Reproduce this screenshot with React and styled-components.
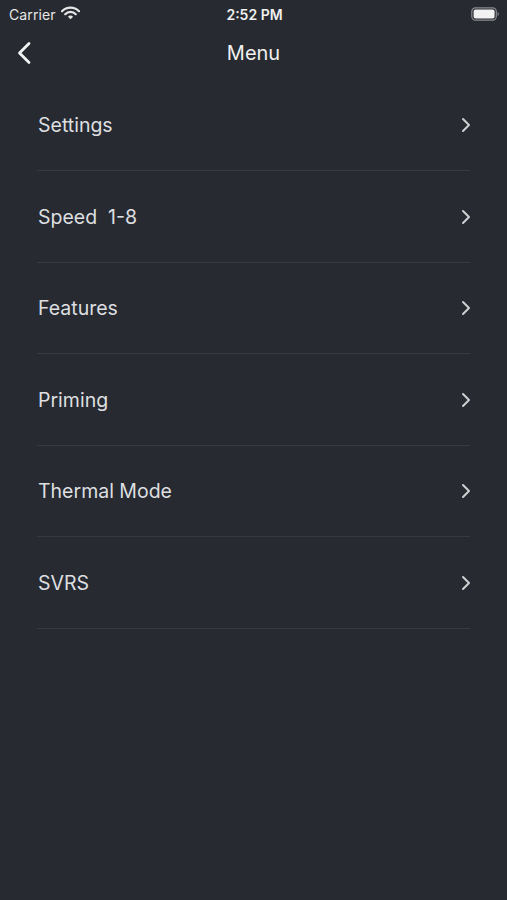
import styled, { createGlobalStyle } from "styled-components";

const GlobalStyle = createGlobalStyle`
  body {
    margin: 0;
    background-color: #272b31;
    font-family: Inter, "Noto Sans", "Liberation Sans", sans-serif;
  }
`;

const items = ["Settings", "Speed  1-8", "Features", "Priming", "Thermal Mode", "SVRS"];

const App = () => {
  return (
    <Screen>
      <GlobalStyle />
      <StatusBar>
        <Carrier>
          Carrier
          <svg width="19" height="14" viewBox="0 0 19 14">
            <path d="M1 5.2a12 12 0 0 1 17 0" stroke="#e6e6e6" strokeWidth="2.2" fill="none" strokeLinecap="round" />
            <path d="M4.2 8.2a7.4 7.4 0 0 1 10.6 0" stroke="#e6e6e6" strokeWidth="2.2" fill="none" strokeLinecap="round" />
            <path d="M9.5 13.2 6.9 10.7a3.7 3.7 0 0 1 5.2 0z" fill="#e6e6e6" />
          </svg>
        </Carrier>
        <Time>2:52 PM</Time>
        <Battery>
          <svg width="29" height="14" viewBox="0 0 29 14">
            <rect x="0.8" y="0.8" width="24.5" height="12.4" rx="3.6" stroke="#8a8c90" strokeWidth="1.2" fill="none" />
            <rect x="2.6" y="2.6" width="21" height="8.8" rx="2" fill="#f2f2f2" />
            <path d="M26.6 5v4a2.2 2.2 0 0 0 0-4z" fill="#8a8c90" />
          </svg>
        </Battery>
      </StatusBar>
      <NavBar>
        <BackButton>
          <svg width="16" height="24" viewBox="0 0 16 24">
            <path d="M13 2.5 3.5 12 13 21.5" stroke="#f2f2f2" strokeWidth="2.8" fill="none" strokeLinecap="round" strokeLinejoin="round" />
          </svg>
        </BackButton>
        <Title>Menu</Title>
      </NavBar>
      <List>
        {items.map((label) => (
          <Row key={label}>
            <Label>{label}</Label>
            <svg width="10" height="16" viewBox="0 0 10 16">
              <path d="M2 2l6 6-6 6" stroke="#cfcfd1" strokeWidth="2" fill="none" strokeLinecap="round" strokeLinejoin="round" />
            </svg>
          </Row>
        ))}
      </List>
    </Screen>
  );
};

const Screen = styled.div`
  width: 507px;
  min-height: 900px;
  background-color: #272b31;
  color: #e6e6e6;
`;

const StatusBar = styled.div`
  height: 28px;
  display: grid;
  grid-template-columns: 1fr auto 1fr;
  align-items: center;
  padding: 0 7px 0 9px;
  font-size: 14px;
`;

const Carrier = styled.div`
  display: flex;
  align-items: center;
  gap: 5px;
  color: #e6e6e6;
  letter-spacing: 0.1px;

  svg {
    margin-top: -3px;
  }
`;

const Time = styled.div`
  font-weight: 600;
  color: #f0f0f0;
`;

const Battery = styled.div`
  display: flex;
  justify-content: flex-end;
`;

const NavBar = styled.div`
  position: relative;
  height: 50px;
  display: flex;
  align-items: center;
  justify-content: center;
`;

const BackButton = styled.div`
  position: absolute;
  left: 16px;
  top: 13px;
  display: flex;
`;

const Title = styled.div`
  font-size: 20px;
  color: #f0f0f0;
  margin-top: -1px;
`;

const List = styled.div`
  padding: 0 37px 0 37px;
  margin-top: 2px;
`;

const Row = styled.div`
  height: 90px;
  display: flex;
  align-items: center;
  justify-content: space-between;
  border-bottom: 1px solid #363a41;
  padding: 0 0 0 1px;
  margin-bottom: 0.6px;

  svg {
    margin-right: -1px;
    margin-top: 0;
  }
`;

const Label = styled.div`
  font-size: 19.5px;
  color: #dedfe0;
  white-space: pre;
  margin-top: 0;
`;

export default App;
